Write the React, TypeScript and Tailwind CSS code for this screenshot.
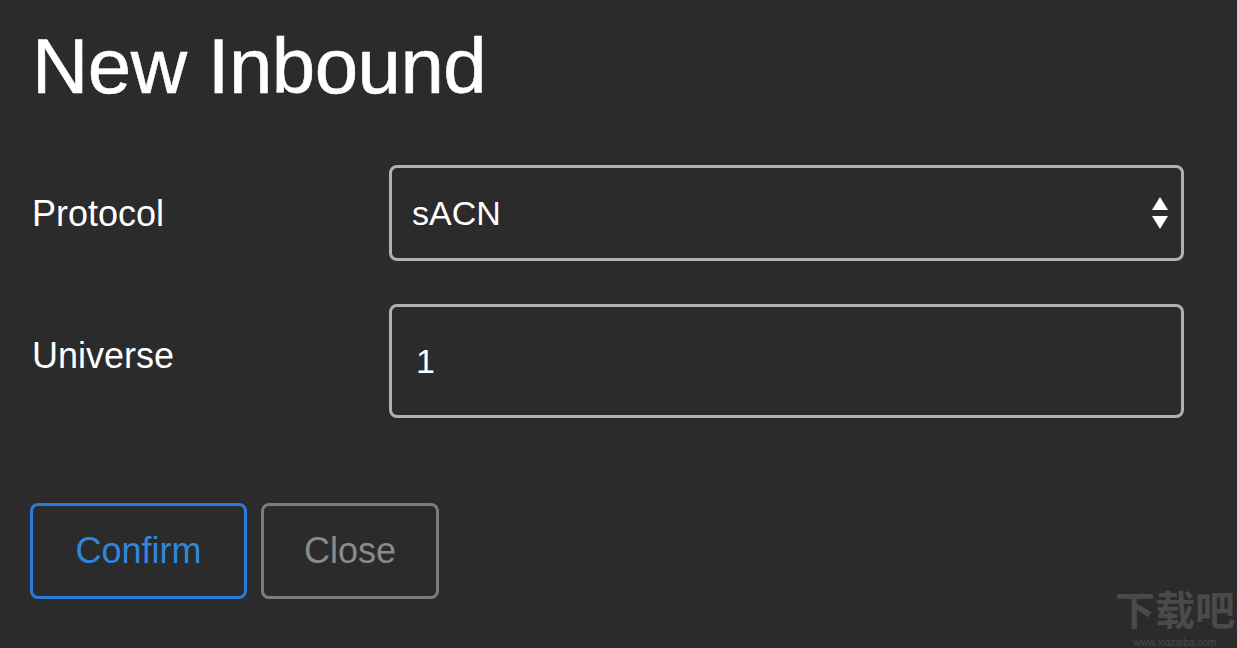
import React from 'react';

const font = { fontFamily: '"Liberation Sans", Arial, sans-serif' };

export default function App() {
  return (
    <div className="relative h-[648px] w-[1237px] overflow-hidden bg-[#2b2b2b] text-white" style={font}>
      <div className="pl-[32px] pt-[27px]">
        {/* Title */}
        <h1 className="text-[78px] leading-none tracking-[-0.5px] text-white [-webkit-text-stroke:0.6px_#ffffff]">New Inbound</h1>

        <div className="mt-[60px] grid grid-cols-[357px_795px] gap-y-[43px]">
          {/* Protocol row */}
          <div className="pt-[31px] text-[36px] leading-none">Protocol</div>
          <div className="flex h-[96px] items-center justify-between rounded-[8px] border-[3px] border-[#b1b1b1] pl-[20px] pr-[12px]">
            <span className="text-[34px] leading-none">sACN</span>
            <svg width="18" height="34" viewBox="0 0 18 34" fill="#ffffff">
              <polygon points="9,1 17,14 1,14" />
              <polygon points="1,20 17,20 9,33" />
            </svg>
          </div>

          {/* Universe row */}
          <div className="pt-[34px] text-[36px] leading-none">Universe</div>
          <div className="flex h-[114px] items-center rounded-[8px] border-[3px] border-[#b1b1b1] pl-[24px]">
            <span className="text-[34px] leading-none">1</span>
          </div>
        </div>

        {/* Buttons */}
        <div className="mt-[85px] flex gap-[14px] -ml-[2px]">
          <button className="flex h-[96px] w-[217px] items-center justify-center rounded-[8px] border-[3px] border-[#2a7bd6] text-[36px] leading-none text-[#2f86dc]">
            Confirm
          </button>
          <button className="flex h-[96px] w-[178px] items-center justify-center rounded-[8px] border-[3px] border-[#7c7c7c] text-[36px] leading-none text-[#8a8a8a]">
            Close
          </button>
        </div>
      </div>

      {/* watermark */}
      <div className="pointer-events-none absolute bottom-[0px] right-[2px] flex flex-col items-center text-[#4a4a4a]">
        <span className="text-[40px] font-bold leading-[58px]" style={{ fontFamily: '"Noto Sans CJK SC", sans-serif' }}>下载吧</span>
        <span className="text-[10px] leading-[11px]">www.xiazaiba.com</span>
      </div>
    </div>
  );
}
